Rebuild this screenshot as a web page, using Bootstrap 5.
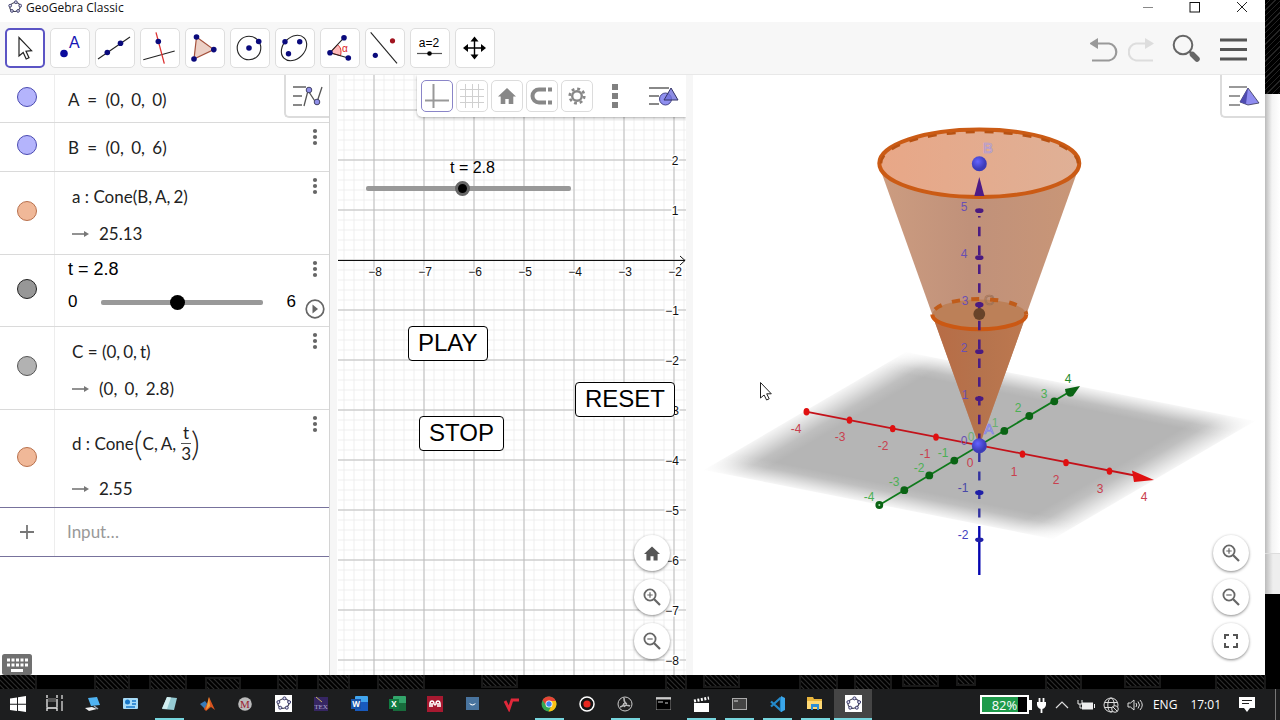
<!DOCTYPE html>
<html lang="en">
<head>
<meta charset="utf-8">
<meta name="viewport" content="width=device-width, initial-scale=1">
<title>GeoGebra Classic</title>
<link href="https://cdn.jsdelivr.net/npm/bootstrap@5.3.0/dist/css/bootstrap.min.css" rel="stylesheet">
<style>
  body { font-family: "Liberation Sans", Arial, sans-serif; background: #000; color: #222; min-height: 100vh; }
  svg { display: block; }
  button { padding: 0; border: 0; background: none; color: inherit; }
  .ui-font { font-family: "Open Sans", sans-serif; }
  .app-window { background: #fff; min-width: 0; }
  .title-strip { height: 22px; font-size: 12px; line-height: 15px; color: #111; }
  .win-btn { width: 47px; height: 15px; display: flex; justify-content: center; }
  .tool-strip { height: 53px; background: #f7f7f7; gap: 5px; padding: 6px 18px 0 5px; border-bottom: 1px solid #e8e8e8; }
  .tool-btn { width: 40px; height: 40px; background: #fff; border: 1px solid #dedede; border-radius: 5px; }
  .tool-btn svg { margin: -1px; }
  .tool-btn.selected { border: 2px solid #5b54c4; }
  .tool-btn.selected svg { margin: -2px; }
  .views { display: grid; grid-template-columns: 330fr 349fr 572fr; gap: 7px; background: #f6f6f6; }
  .view { position: relative; background: #fff; overflow: hidden; min-width: 0; }
  .view > svg { position: absolute; inset: 0; width: 100%; height: 100%; }
  .algebra { border-right: 1px solid #d4d4d4; }
  .view-toggle { position: absolute; top: 0; right: 0; width: 45px; height: 43px; background: #fff; border: solid #dcdcdc; border-width: 0 0 2px 2px; border-bottom-left-radius: 5px; display: flex; align-items: center; justify-content: center; }
  .style-bar { position: absolute; top: 0; right: 0; height: 42px; padding: 5px 6px 5px 4px; gap: 3px; background: #fff; border-bottom-left-radius: 5px; box-shadow: 0 1px 3px #0005; }
  .style-bar .toggle { padding-left: 19px; }
  .style-btn { width: 32px; height: 32px; border: 1px solid #dcdcdc; border-radius: 5px; }
  .style-btn svg { margin: -1px; }
  .style-btn.selected { border-color: #8a85c8; }

  .entry { display: flex; border-bottom: 1px solid #dadada; }
  .h-a { height: 48px; } .h-b { height: 49px; } .h-two { height: 83px; } .h-slider { height: 72px; } .h-frac { height: 98px; }
  .gutter { width: 55px; flex: none; border-right: 1px solid #ededed; display: flex; align-items: center; justify-content: center; padding-bottom: 4px; }
  .gutter button { width: 20px; height: 20px; border-radius: 50%; border: 1px solid; }
  .c-blue { background: #b4b4fc; border-color: #4a4ab0 !important; }
  .c-orange { background: #f0b898; border-color: #b8704c !important; }
  .c-dark { background: #979797; border-color: #222 !important; }
  .c-grey { background: #b2b2b2; border-color: #555 !important; }
  .math { font-family: Lato, "Open Sans", sans-serif; font-size: 17px; line-height: 37px; padding-left: 17px; padding-top: 6px; white-space: nowrap; }
  .math.simple { padding-left: 13px; }
  .math i { font-style: normal; margin-right: 3px; }
  .math b { font-weight: 400; margin: 0 4px; }
  .result { display: flex; align-items: center; gap: 10px; }
  .frac-line { height: 54px; display: flex; align-items: center; }
  .big-paren { font-weight: 300; font-size: 34px; line-height: 34px; }
  .frac { display: inline-flex; flex-direction: column; text-align: center; line-height: 20px; margin-left: 5px; }
  .frac span + span { border-top: 1px solid #555; }
  .side { width: 28px; flex: none; display: flex; flex-direction: column; align-items: center; }
  .side button { height: 28px; width: 20px; display: flex; justify-content: center; align-items: center; }
  .t-body { font-size: 18px; padding-left: 13px; padding-right: 5px; color: #000; }
  .t-body label { display: block; line-height: 28px; }
  .t-body .track-line { line-height: 38px; gap: 24px; font-size: 17px; }
  input[type=range] { appearance: none; -webkit-appearance: none; background: none; margin: 0; height: 17px; min-width: 0; }
  input[type=range]::-webkit-slider-runnable-track { height: 5px; background: #999; border-radius: 2px; }
  input[type=range]::-webkit-slider-thumb { -webkit-appearance: none; width: 15px; height: 15px; margin-top: -5px; border-radius: 50%; background: #000; }
  .canvas-range::-webkit-slider-thumb { width: 17px; height: 17px; margin-top: -6px; border: 3px solid #666; }
  .input-entry { height: 50px; border-top: 1px solid #77729c; border-bottom: 1px solid #77729c; margin-top: -1px; }
  .input-entry input { border: 0; width: 100%; padding: 0 12px 2px; font: 17px Lato, sans-serif; outline: 0; }
  .input-entry input::placeholder { color: #999; }
  .keyboard-btn { position: absolute; left: 2px; bottom: 0; }

  .pin { position: absolute; }
  .canvas-btn { height: 35px; padding: 0 9px 2px; border: 1px solid #000; border-radius: 4px; background: #fff; color: #000; font-size: 24px; line-height: 30px; }
  .p-play { left: 71px; top: 251px; } .p-stop { left: 82px; top: 341px; } .p-reset { left: 238px; top: 307px; }
  .p-slider { left: 29px; top: 83px; width: 205px; }
  .p-slider label { display: block; font-size: 16px; line-height: 20px; color: #000; padding-left: 84px; }
  .p-slider input { width: 100%; display: block; margin-top: 2px; }
  .float-stack { position: absolute; right: 16px; bottom: 16px; display: flex; flex-direction: column; gap: 8px; }
  .float-stack button { width: 36px; height: 36px; border-radius: 50%; background: #fff; box-shadow: 0 1px 3px #0007; display: flex; align-items: center; justify-content: center; }
  .tick-label text { text-anchor: middle; font-size: 12px; }

  .behind { width: 15px; }
  .behind .dark { height: 94px; background: repeating-linear-gradient(135deg, #000 0 3px, #242424 3px 4px); }
  .behind .page-edge { background: linear-gradient(90deg, #bbb, #f4f4f4 7px, #fff); }
  .behind .page-foot { height: 41px; background: linear-gradient(90deg, #bbb, #eee 8px); border-top: 1px solid #ddd; }
  .behind .rest { height: 81px; }
  .taskbar { height: 31px; background: #1d1e1f; color: #fff; }
  .task { width: 38px; height: 31px; display: flex; align-items: center; justify-content: center; border-bottom: 2px solid transparent; position: relative; flex: none; }
  .task.slim { width: 36px; } .task.wide { width: 40px; }
  .task.open::after { content: ""; position: absolute; left: 5px; right: 4px; bottom: -2px; height: 2px; background: #76d5dd; }
  .task.current { background: #454545; } .task.current::after { left: 0; right: 0; }
  .tray { font-size: 12px; margin-left: auto; }
  .tray .lang { margin: 0 13px 0 9px; }
  .tray .clock { margin-right: 18px; }
  .tray .gauge { width: 49px; height: 19px; border: 2px solid #fff; background: linear-gradient(90deg, #1e9a4a 80%, #000 80%); font-size: 13px; line-height: 16px; text-align: center; }
  .tray .nub { width: 3px; height: 10px; background: #fff; }
  .edge-line { width: 1px; height: 31px; background: #777; margin: 0 4px 0 19px; }
</style>
</head>
<body class="d-flex flex-column">
<svg width="0" height="0" class="position-absolute" aria-hidden="true">
  <defs>
    <symbol id="dots" viewBox="0 0 6 18"><g fill="#666"><circle cx="3" cy="3" r="2.1"/><circle cx="3" cy="9" r="2.1"/><circle cx="3" cy="15" r="2.1"/></g></symbol>
    <symbol id="arrow" viewBox="0 0 17 8"><path d="M0 4H13" stroke="#777" stroke-width="1.6"/><path d="M12 1l5 3-5 3z" fill="#777"/></symbol>
    <symbol id="zin" viewBox="0 0 20 20"><g fill="none" stroke="#666"><circle cx="8" cy="8" r="5.6" stroke-width="1.8"/><path d="M12 12l6 6" stroke-width="2.2"/><path d="M5.3 8h5.4M8 5.3v5.4" stroke-width="1.2"/></g></symbol>
    <symbol id="zout" viewBox="0 0 20 20"><g fill="none" stroke="#666"><circle cx="8" cy="8" r="5.6" stroke-width="1.8"/><path d="M12 12l6 6" stroke-width="2.2"/><path d="M5.3 8h5.4" stroke-width="1.2"/></g></symbol>
    <symbol id="home" viewBox="0 0 18 16"><path d="M9 0L0 8.500h2.700V16h4.600v-5h3.400v5h4.600V8.500H18z"/></symbol>
    <symbol id="ggb" viewBox="0 0 16 16"><ellipse cx="8" cy="8" rx="6" ry="5" fill="none" stroke="#445" stroke-width="1.3" transform="rotate(-15 8 8)"/><g fill="#dde" stroke="#336" stroke-width="1"><circle cx="9" cy="2.500" r="1.600"/><circle cx="14" cy="6.500" r="1.600"/><circle cx="11.500" cy="12.500" r="1.600"/><circle cx="4.500" cy="12.500" r="1.600"/><circle cx="2.500" cy="6.500" r="1.600"/></g></symbol>
  </defs>
</svg>

<div class="d-flex flex-grow-1">
  <main class="app-window d-flex flex-column flex-grow-1">
    <header class="title-strip ui-font d-flex">
      <svg class="ms-2 me-1" width="14" height="14"><use href="#ggb"/></svg>
      <span>GeoGebra Classic</span>
      <div class="ms-auto d-flex">
        <button class="win-btn" aria-label="Minimise"><svg width="12" height="14"><path d="M1 7.500h10" stroke="#888"/></svg></button>
        <button class="win-btn" aria-label="Maximise"><svg width="12" height="14"><rect x="1" y="2.500" width="9.500" height="9.500" fill="none" stroke="#111"/></svg></button>
        <button class="win-btn" aria-label="Close"><svg width="12" height="14"><path d="M1 2l10 10M11 2L1 12" stroke="#222"/></svg></button>
      </div>
    </header>

    <nav class="tool-strip d-flex" aria-label="Tools">
      <button class="tool-btn selected" aria-label="Move"><svg width="40" height="40"><path d="M14 9.500V28l4.200-3.500 3 6.500 2.800-1.200-3-6.600 5.600-.5z" fill="#fff" stroke="#222" stroke-width="1.200"/></svg></button>
      <button class="tool-btn" aria-label="Point"><svg width="40" height="40"><circle cx="14" cy="25.500" r="3.800" fill="#0a0a9c"/><text x="19" y="20" font-size="16" fill="#1515b5">A</text></svg></button>
      <button class="tool-btn" aria-label="Line"><svg width="40" height="40"><path d="M3 31L35 9" stroke="#222" stroke-width="1.100"/><g fill="#0a0a7c"><circle cx="12.300" cy="24.500" r="2.800"/><circle cx="25.500" cy="15.300" r="2.800"/></g></svg></button>
      <button class="tool-btn" aria-label="Perpendicular line"><svg width="40" height="40"><path d="M3.300 31.700L34.700 23" stroke="#222" stroke-width="1.100"/><path d="M16 4.300l8.300 31.400" stroke="#d33" stroke-width="1.300"/><circle cx="18.300" cy="13.500" r="2.800" fill="#0a0a7c"/></svg></button>
      <button class="tool-btn" aria-label="Polygon"><svg width="40" height="40"><path d="M11.500 9l17.300 12.600L9 31z" fill="#ecd0c6" stroke="#a4513c" stroke-width="1.200"/><g fill="#0a0a7c"><circle cx="11.500" cy="9" r="2.800"/><circle cx="28.800" cy="21.600" r="2.800"/><circle cx="9" cy="31" r="2.800"/></g></svg></button>
      <button class="tool-btn" aria-label="Circle"><svg width="40" height="40"><circle cx="19" cy="20" r="11.800" fill="none" stroke="#222" stroke-width="1.100"/><g fill="#0a0a7c"><circle cx="19" cy="20" r="2.800"/><circle cx="28.700" cy="13.500" r="2.800"/></g></svg></button>
      <button class="tool-btn" aria-label="Ellipse"><svg width="40" height="40"><ellipse cx="19" cy="20" rx="14.300" ry="10.800" transform="rotate(-45 19 20)" fill="none" stroke="#222" stroke-width="1.100"/><g fill="#0a0a7c"><circle cx="10" cy="13.700" r="2.700"/><circle cx="24.700" cy="13.700" r="2.700"/><circle cx="13.500" cy="25.700" r="2.700"/></g></svg></button>
      <button class="tool-btn" aria-label="Angle"><svg width="40" height="40"><path d="M10 24.700l7.500-8c3 2 4.300 6 3 11z" fill="#fbb" stroke="#d33"/><path d="M24 9.700L10 24.700 28.300 30" fill="none" stroke="#222" stroke-width="1.100"/><text x="22" y="24" font-size="10" fill="#d22">α</text><g fill="#0a0a7c"><circle cx="24" cy="9.700" r="2.800"/><circle cx="10" cy="24.700" r="2.800"/><circle cx="28.300" cy="30" r="2.800"/></g></svg></button>
      <button class="tool-btn" aria-label="Reflect"><svg width="40" height="40"><path d="M5.700 4.300L32 35.300" stroke="#222" stroke-width="1.100"/><circle cx="10.300" cy="27.300" r="2.600" fill="#0a0a7c"/><circle cx="27.500" cy="12.800" r="2.600" fill="#a11520"/></svg></button>
      <button class="tool-btn" aria-label="Slider"><svg width="40" height="40"><text x="19" y="19" text-anchor="middle" font-size="12">a=2</text><path d="M7 25.500h25" stroke="#555" stroke-width="1.200"/><circle cx="19.500" cy="25.500" r="2.300"/></svg></button>
      <button class="tool-btn" aria-label="Move view"><svg width="40" height="40"><path d="M19.500 11v18M10.500 20h18" stroke="#000" stroke-width="1.400"/><path d="M19.500 8.500l4 5h-8zM19.500 31.500l4-5h-8zM8 20l5-4v8zM31 20l-5-4v8z"/></svg></button>
      <div class="ms-auto d-flex align-items-center pb-1">
        <button aria-label="Undo" class="me-2"><svg width="30" height="26"><path d="M7 7.500h12a8.600 8.600 0 0 1 0 17H2" fill="none" stroke="#999" stroke-width="2.200"/><path d="M-1 7.500L8 2v11z" fill="#999"/></svg></button>
        <button aria-label="Redo" class="me-3"><svg width="28" height="26"><path d="M18 7.500H8a8.600 8.600 0 0 0 0 17h17" fill="none" stroke="#ddd" stroke-width="2.200"/><path d="M26 7.500L17 2v11z" fill="#ddd"/></svg></button>
        <button aria-label="Search" class="me-3"><svg width="32" height="30"><circle cx="11" cy="11" r="9.300" fill="none" stroke="#666" stroke-width="2"/><path d="M17 17l4 4" stroke="#666" stroke-width="2.500"/><path d="M20.500 20.500l4.500 4.500" stroke="#666" stroke-width="5.500" stroke-linecap="round"/></svg></button>
        <button aria-label="Menu"><svg width="27" height="26"><path d="M0 4h27M0 13.500h27M0 23h27" stroke="#555" stroke-width="2.800"/></svg></button>
      </div>
    </nav>

    <div class="views flex-grow-1">
      <section class="view algebra" aria-label="Algebra">
        <div class="entry h-a"><div class="gutter"><button class="c-blue" aria-label="Show A"></button></div><div class="math simple">A <b>=</b> (0,<i></i> 0,<i></i> 0)</div></div>
        <div class="entry h-b"><div class="gutter"><button class="c-blue" aria-label="Show B"></button></div><div class="math simple flex-grow-1">B <b>=</b> (0,<i></i> 0,<i></i> 6)</div><div class="side"><button aria-label="More"><svg width="6" height="18"><use href="#dots"/></svg></button></div></div>
        <div class="entry h-two"><div class="gutter"><button class="c-orange" aria-label="Show a"></button></div><div class="math flex-grow-1"><div>a : Cone(B,<i></i>A,<i></i>2)</div><div class="result"><svg width="17" height="8"><use href="#arrow"/></svg>25.13</div></div><div class="side"><button aria-label="More"><svg width="6" height="18"><use href="#dots"/></svg></button></div></div>
        <div class="entry h-slider"><div class="gutter"><button class="c-dark" aria-label="Show t"></button></div>
          <div class="t-body flex-grow-1"><label for="t1">t = 2.8</label><div class="track-line d-flex align-items-center"><span>0</span><input id="t1" type="range" class="flex-grow-1" min="0" max="6" step="0.1" value="2.8"><span>6</span></div></div>
          <div class="side"><button aria-label="More"><svg width="6" height="18"><use href="#dots"/></svg></button><button class="mt-2 pt-2" aria-label="Play"><svg width="20" height="20"><circle cx="10" cy="10" r="8.800" fill="none" stroke="#666" stroke-width="1.700"/><path d="M7.500 5.500L13 10l-5.500 4.500z" fill="#666"/></svg></button></div></div>
        <div class="entry h-two"><div class="gutter"><button class="c-grey" aria-label="Show C"></button></div><div class="math flex-grow-1"><div>C <b class="mx-0">=</b> (0,<i></i>0,<i></i>t)</div><div class="result"><svg width="17" height="8"><use href="#arrow"/></svg><span>(0,<i></i> 0,<i></i> 2.8)</span></div></div><div class="side"><button aria-label="More"><svg width="6" height="18"><use href="#dots"/></svg></button></div></div>
        <div class="entry h-frac"><div class="gutter"><button class="c-orange" aria-label="Show d"></button></div><div class="math flex-grow-1"><div class="frac-line"><span>d : Cone</span><span class="big-paren">(</span><span>C,<i></i>A,</span><span class="frac"><span>t</span><span>3</span></span><span class="big-paren">)</span></div><div class="result"><svg width="17" height="8"><use href="#arrow"/></svg>2.55</div></div><div class="side"><button aria-label="More"><svg width="6" height="18"><use href="#dots"/></svg></button></div></div>
        <div class="d-flex input-entry"><div class="gutter pb-0"><svg width="14" height="14"><path d="M7 0v14M0 7h14" stroke="#777" stroke-width="1.800"/></svg></div><input type="text" aria-label="Input" placeholder="Input…"></div>
        <button class="view-toggle" aria-label="Algebra style bar"><svg width="32" height="22"><path d="M1 2h13M1 11h9M1 20h9" stroke="#888" stroke-width="2"/><path d="M12 21L16 5.500l8.500 13L30 2" fill="none" stroke="#555" stroke-width="1.300"/><g fill="#8f8fe8" stroke="#446"><circle cx="17" cy="5" r="2.800"/><circle cx="25" cy="17" r="2.800"/></g></svg></button>
        <button class="keyboard-btn" aria-label="Keyboard"><svg width="31" height="22"><rect x="0" y="1" width="30" height="21" rx="2.500" fill="#707070"/><path d="M5 7h21M5 12h21" stroke="#fff" stroke-width="3" stroke-dasharray="3 1.500"/><path d="M9 17.500h12" stroke="#fff" stroke-width="3"/></svg></button>
      </section>

      <section class="view" aria-label="Graphics">
        <svg viewBox="337 75 349 600" preserveAspectRatio="xMinYMin slice">
          <defs>
            <pattern id="minor" x="3.500" y="9.500" width="10" height="10" patternUnits="userSpaceOnUse"><path d="M.5 0v10M0 .5h10" stroke="#eee"/></pattern>
            <pattern id="major" x="23.500" y="9.500" width="50" height="50" patternUnits="userSpaceOnUse"><path d="M.5 0v50M0 .5h50" stroke="#bdbdbd"/></pattern>
          </defs>
          <rect x="338" y="75" width="348" height="600" fill="url(#minor)"/>
          <rect x="338" y="75" width="348" height="600" fill="url(#major)"/>
          <path d="M338 260.500h347M680 256l5 4.500-5 4.500" fill="none" stroke="#111"/>
          <g class="tick-label" stroke="#fff" stroke-width="3" paint-order="stroke" fill="#111"><text x="375" y="276">−8</text><text x="425" y="276">−7</text><text x="475" y="276">−6</text><text x="525" y="276">−5</text><text x="575" y="276">−4</text><text x="625" y="276">−3</text><text x="675" y="276">−2</text>
          <text x="675" y="165">2</text><text x="675" y="215">1</text><text x="672" y="315">−1</text><text x="672" y="365">−2</text><text x="672" y="415">−3</text><text x="672" y="465">−4</text><text x="672" y="515">−5</text><text x="672" y="565">−6</text><text x="672" y="615">−7</text><text x="672" y="665">−8</text></g>
        </svg>
        <div class="pin p-slider"><label for="t2">t = 2.8</label><input id="t2" class="canvas-range" type="range" min="0" max="6" step="0.1" value="2.8"></div>
        <button class="pin canvas-btn p-play">PLAY</button>
        <button class="pin canvas-btn p-stop">STOP</button>
        <button class="pin canvas-btn p-reset">RESET</button>
        <div class="style-bar d-flex">
          <button class="style-btn selected" aria-label="Axes"><svg width="32" height="32"><path d="M12.500 4v24M4 20.500h24" stroke="#999" stroke-width="2"/></svg></button>
          <button class="style-btn" aria-label="Grid"><svg width="32" height="32"><path d="M9.500 4v24M16.500 4v24M22.500 4v24M4 9.500h24M4 16.500h24M4 22.500h24" stroke="#d0d0d0"/></svg></button>
          <button class="style-btn" aria-label="Home"><svg width="32" height="32"><use href="#home" x="7" y="8" width="18" height="16" fill="#888"/></svg></button>
          <button class="style-btn" aria-label="Snap"><svg width="32" height="32"><path d="M20 9.500h-7a6.500 6.500 0 0 0 0 13h7" fill="none" stroke="#888" stroke-width="4"/><path d="M22 9.500h4M22 22.500h4" stroke="#888" stroke-width="4"/></svg></button>
          <button class="style-btn" aria-label="Settings"><svg width="32" height="32"><circle cx="16" cy="16" r="4.800" fill="none" stroke="#888" stroke-width="2.400"/><circle cx="16" cy="16" r="7.300" fill="none" stroke="#888" stroke-width="2.600" stroke-dasharray="2.900 2.830"/></svg></button>
          <button class="ms-2" aria-label="More"><svg width="22" height="24"><path d="M8 0h6v6H8zM8 9h6v6H8zM8 18h6v6H8z" fill="#808080"/></svg></button>
          <button class="ms-auto toggle" aria-label="Graphics style bar"><svg width="32" height="24"><path d="M1 4h20M1 12h10M1 20h10" stroke="#888" stroke-width="2"/><circle cx="17.500" cy="15" r="6" fill="#8f8fef" stroke="#448"/><path d="M23 4l7 12H16z" fill="#6f6fdccc" stroke="#336"/></svg></button>
        </div>
        <div class="float-stack">
          <button aria-label="Home"><svg width="16" height="15" fill="#555"><use href="#home"/></svg></button>
          <button aria-label="Zoom in"><svg width="20" height="20"><use href="#zin"/></svg></button>
          <button aria-label="Zoom out"><svg width="20" height="20"><use href="#zout"/></svg></button>
        </div>
      </section>

      <section class="view" aria-label="3D Graphics">
        <svg viewBox="693 75 572 600" preserveAspectRatio="xMidYMid slice">
          <defs>
            <linearGradient id="f1" x2="1" y2="0"><stop offset="0" stop-color="#fff" stop-opacity=".95"/><stop offset=".3" stop-color="#fff" stop-opacity=".62"/><stop offset=".7" stop-color="#fff" stop-opacity=".14"/><stop offset="1" stop-color="#fff" stop-opacity="0"/></linearGradient>
            <linearGradient id="f2" href="#f1" x1="1" x2="0"/>
            <linearGradient id="f3" href="#f1" x2="0" y2="1"/>
            <linearGradient id="f4" href="#f1" x2="0" y1="1" y2="0"/>
            <linearGradient id="body"><stop offset="0" stop-color="#cc9c80"/><stop offset=".45" stop-color="#c0917a"/><stop offset="1" stop-color="#c99677"/></linearGradient>
            <linearGradient id="lid"><stop offset="0" stop-color="#e8a787"/><stop offset="1" stop-color="#dfb096"/></linearGradient>
            <linearGradient id="small"><stop offset="0" stop-color="#b86c45"/><stop offset=".5" stop-color="#b5734d"/><stop offset="1" stop-color="#bd784f"/></linearGradient>
            <radialGradient id="ball" cx=".4" cy=".35"><stop offset="0" stop-color="#6464ff"/><stop offset="1" stop-color="#3c3cb8"/></radialGradient>
          </defs>
          <g transform="matrix(3.49 .69 -2.02 1.18 906 352)">
            <rect width="100" height="100" fill="#b5b5b5"/>
            <rect x="-1" y="-1" width="14" height="102" fill="url(#f1)"/><rect x="87" y="-1" width="14" height="102" fill="url(#f2)"/><rect x="-1" y="-1" width="102" height="15" fill="url(#f3)"/><rect x="-1" y="86" width="102" height="15" fill="url(#f4)"/>
          </g>
          <path d="M806 411.700L1140 476.500" stroke="#c4121a" stroke-width="1.800"/>
          <g fill="#e01010"><path d="M1132 470.500l22 9.500-20 2z"/><ellipse cx="806.500" cy="411.700" rx="3" ry="3.800"/><ellipse cx="849.500" cy="420.200" rx="2.800" ry="3.600"/><ellipse cx="892.700" cy="428.700" rx="2.800" ry="3.600"/><ellipse cx="936" cy="437.200" rx="2.800" ry="3.600"/><ellipse cx="1022.500" cy="454.200" rx="2.800" ry="3.600"/><ellipse cx="1066" cy="462.700" rx="2.800" ry="3.600"/><ellipse cx="1109.500" cy="471.200" rx="2.800" ry="3.600"/></g>
          <path d="M879.300 505L1070 391.500" stroke="#0f7a1c" stroke-width="1.800"/>
          <g fill="#0a6414"><path d="M1065 389l15-3-7 10q-7 3-8-7z"/><circle cx="879.300" cy="505" r="3.900"/><circle cx="904.300" cy="490.200" r="3.900"/><circle cx="929.300" cy="475.400" r="3.900"/><circle cx="954.300" cy="460.600" r="3.900"/><circle cx="1004.300" cy="430.900" r="3.900"/><circle cx="1029.300" cy="416" r="3.900"/><circle cx="1054.300" cy="401.300" r="3.900"/></g>
          <circle cx="879.300" cy="505" r="1" fill="#b8e0b8"/>
          <path d="M882 174L979.300 446 1076.500 174z" fill="url(#body)"/>
          <path d="M933 317L979.300 446 1025.500 317z" fill="url(#small)"/>
          <ellipse cx="979.300" cy="314.500" rx="47" ry="15" fill="#bc8058"/>
          <ellipse cx="979.300" cy="163.300" rx="100" ry="34" fill="url(#lid)"/>
          <path d="M932.300 314.500a47 15.500 0 0 1 94 0" fill="none" stroke="#c05c1a" stroke-width="4" stroke-dasharray="8 11" stroke-dashoffset="-6"/>
          <path d="M932.300 314.500a47 14.800 0 0 0 94 0" fill="none" stroke="#cb5813" stroke-width="4"/>
          <ellipse cx="979.300" cy="163.300" rx="100" ry="33.700" fill="none" stroke="#cb5b15" stroke-width="4"/>
          <path d="M881 163.500a98.500 31.500 0 0 1 197 0" fill="none" stroke="#b85212" stroke-width="2.500" stroke-dasharray="9 10"/>
          <path d="M979.300 216V440" stroke="#4b1c82" stroke-width="2.600" stroke-dasharray="9.500 9.300" stroke-dashoffset="8"/>
          <path d="M979.300 453V526" stroke="#3232a0" stroke-width="2.400" stroke-dasharray="9 9.500"/><path d="M979.300 526v49" stroke="#0505b0" stroke-width="2.400"/>
          <path d="M979.300 177l5 19h-10z" fill="#4d1b86"/>
          <g fill="#4a1a80"><ellipse cx="979.300" cy="210.700" rx="4.200" ry="2.400"/><ellipse cx="979.300" cy="257.700" rx="4.200" ry="2.400"/><ellipse cx="979.300" cy="304.700" rx="4.200" ry="2.600"/><ellipse cx="979.300" cy="351.700" rx="4.200" ry="2.400"/><ellipse cx="979.300" cy="398.700" rx="4.200" ry="2.400"/></g>
          <g fill="#1f1fa8"><ellipse cx="979.300" cy="492.700" rx="4.200" ry="2.400"/><ellipse cx="979.300" cy="539.800" rx="4.200" ry="2.400"/></g>
          <circle cx="979.300" cy="163.700" r="7.500" fill="url(#ball)"/><circle cx="979.300" cy="445.700" r="7.500" fill="url(#ball)"/><circle cx="979.300" cy="314" r="5.900" fill="#684329"/>
          <g class="tick-label" fill="#c9404e"><text x="796" y="433">-4</text><text x="840" y="441">-3</text><text x="883" y="450">-2</text><text x="925" y="458">-1</text><text x="970" y="467">0</text><text x="1014" y="476">1</text><text x="1056" y="484">2</text><text x="1100" y="493">3</text><text x="1144" y="501">4</text></g>
          <g class="tick-label" fill="#4bb054"><text x="869" y="501">-4</text><text x="894" y="486">-3</text><text x="919" y="472">-2</text><text x="943" y="457">-1</text><text x="971" y="441" opacity=".7">0</text><text x="995" y="427" opacity=".7">1</text><text x="1018" y="412">2</text><text x="1044" y="398">3</text><text x="1068" y="383" fill="#218a2a">4</text></g>
          <g class="tick-label" fill="#6a50b4"><text x="964" y="211">5</text><text x="964" y="258">4</text><text x="965" y="305">3</text><text x="964" y="352">2</text><text x="965" y="399">1</text><text x="964" y="445">0</text><text x="963" y="492" fill="#4848a8">-1</text><text x="963" y="539" fill="#4040c0">-2</text></g>
          <g font-size="14" text-anchor="middle" fill="none" stroke-width=".7"><text x="988" y="153" stroke="#a99be0" font-size="15">B</text><text x="989" y="434" stroke="#8080f0">A</text><text x="989" y="305" stroke="#9c7055">C</text></g>
          <path d="M760.500 382.500v15.500l3.600-3 2.500 5 2.600-1.200-2.500-5h4.600z" fill="#fff" stroke="#222"/>
        </svg>
        <button class="view-toggle" aria-label="3D style bar"><svg width="32" height="22"><path d="M1 2h18M1 11h11M1 20h11" stroke="#999" stroke-width="2"/><path d="M20 3l11 15-11 2-8-3z" fill="#8f8cf0" stroke="#335" stroke-width=".8"/><path d="M20 3l-2 16-6-2z" fill="#4f4bb0"/></svg></button>
        <div class="float-stack">
          <button aria-label="Zoom in"><svg width="20" height="20"><use href="#zin"/></svg></button>
          <button aria-label="Zoom out"><svg width="20" height="20"><use href="#zout"/></svg></button>
          <button aria-label="Full screen"><svg width="16" height="16"><path d="M2 6V2h4M10 2h4v4M14 10v4h-4M6 14H2v-4" fill="none" stroke="#555" stroke-width="2"/></svg></button>
        </div>
      </section>
    </div>
  </main>
  <aside class="behind d-flex flex-column" aria-hidden="true"><div class="dark"></div><div class="page-edge flex-grow-1"></div><div class="page-foot"></div><div class="rest"></div></aside>
</div>

<svg class="w-100" height="14" aria-hidden="true"><defs><pattern id="hatch" width="5" height="5" patternUnits="userSpaceOnUse"><path d="M-1 1l2-2M-1 -1l7 7M4 -1l2 2M-1 4l2 2" stroke="#2c2c2c" stroke-width="1.200"/></pattern></defs>
  <g fill="url(#hatch)" stroke="#191919" stroke-width="2"><path d="M-2-2h38v18H-2zM95-2h34v18H95zM150-2h36v18h-36zM206 3h34v13h-34zM278-2h19v18h-19zM318-2h31v18h-31zM378-2h46v18h-46zM482-2h35v14h-35zM666-2h20v18h-20zM704-2h35v14h-35zM800-2h37v18h-37zM855-2h36v18h-36zM903-2h35v13h-35zM957-2h18v12h-18zM1046-2h35v18h-35zM1125-2h35v14h-35zM1216-2h49v18h-49z"/></g></svg>

<footer class="taskbar ui-font d-flex">
  <button class="task slim" aria-label="Start"><svg width="16" height="16"><path d="M0 2.500l7-1v6.300H0zM8 1.300L16 0v7.800H8zM0 8.700h7V15l-7-1zM8 8.700h8V16l-8-1.200z" fill="#fff"/></svg></button>
  <button class="task slim" aria-label="Task view"><svg width="17" height="17"><path d="M1 0v3M11 0v3M1 16v-3h10v3M1 4v8M11 4v8" stroke="#eee" fill="none" stroke-width="1.300"/><path d="M2 3h8v4H2z" fill="#555"/><path d="M16 0v4M16 6v10" stroke="#999" stroke-width="2"/></svg></button>
  <button class="task wide" aria-label="Remote desktop"><svg width="17" height="16"><path d="M4 2l9-1 3 8-9 1z" fill="#4fb3f3"/><path d="M10 10l4 3" stroke="#9ab" fill="none" stroke-width="1.500"/><path d="M1 12l7-1 5 2-8 2z" fill="#eee"/></svg></button>
  <button class="task" aria-label="Control panel"><svg width="16" height="14"><rect y="1" width="15" height="11" rx="1" fill="#a8dcf8"/><circle cx="4.500" cy="5" r="2.500" fill="#1877c8"/><path d="M9 4h4M9 7h4M3 10h9" stroke="#1877c8" stroke-width="1.500"/></svg></button>
  <button class="task open" aria-label="Notepad"><svg width="17" height="16"><path d="M6 1l10 1-3 12-12-1z" fill="#95cbd3"/><path d="M6 1l4 .5L6 13l-5-.5z" fill="#d3eef0"/></svg></button>
  <button class="task" aria-label="MATLAB"><svg width="17" height="16"><path d="M1 8l5-3 3 4-3 4z" fill="#367bb8"/><path d="M10 1l6 13-4-3-5 4-2-2 3-5z" fill="#d8541f"/><path d="M10 1l1 9-4 4z" fill="#f1a13a"/></svg></button>
  <button class="task" aria-label="MiKTeX"><svg width="16" height="16"><circle cx="8" cy="8" r="6.800" fill="#bbb"/><text x="8" y="12" font-family="Liberation Serif, serif" font-size="11" text-anchor="middle" fill="#9b2230">M</text></svg></button>
  <button class="task" aria-label="GeoGebra"><svg width="17" height="17"><rect width="17" height="17" fill="#fff"/><use href="#ggb" x="1" y="1" width="15" height="15"/></svg></button>
  <button class="task" aria-label="TeXworks"><svg width="15" height="15"><rect y="1" width="14" height="14" fill="#362663"/><text x="7" y="13" font-family="Liberation Serif, serif" font-size="7" text-anchor="middle" fill="#aaa5cf">TEX</text><path d="M2 1l6 5" stroke="#c8b660"/></svg></button>
  <button class="task" aria-label="Word"><svg width="17" height="16"><rect x="4" width="13" height="15" rx="1" fill="#41a5ee"/><path d="M4 6h13v9H4z" fill="#185abd"/><rect y="3" width="10" height="10" fill="#1853a8"/><text x="5" y="11" font-size="8" font-weight="700" text-anchor="middle" fill="#fff">W</text></svg></button>
  <button class="task" aria-label="Excel"><svg width="17" height="16"><rect x="4" width="13" height="15" rx="1" fill="#33a56b"/><path d="M4 7h13v8H4z" fill="#186c3c"/><rect y="3" width="10" height="10" fill="#107c41"/><text x="5" y="11" font-size="8" font-weight="700" text-anchor="middle" fill="#fff">X</text></svg></button>
  <button class="task" aria-label="Mendeley"><svg width="16" height="16"><rect width="16" height="16" fill="#a71930"/><path d="M3 11V8q0-3 2-3t2 3q1 2 2 0 0-3 2-3t2 3v3M5 7v4M11 7v4" fill="none" stroke="#fff" stroke-width="1.600"/></svg></button>
  <button class="task" aria-label="Pocket"><svg width="14" height="14"><rect width="13" height="13" fill="#49749e"/><path d="M3 6q3.500 5 7 0l-3.500 1.500z" fill="#fff"/></svg></button>
  <button class="task" aria-label="Root"><svg width="17" height="16"><path d="M2 5l4 8 3-9h7" fill="none" stroke="#e0283a" stroke-width="2.800"/></svg></button>
  <button class="task open" aria-label="Chrome"><svg width="16" height="16" viewBox="0 0 16 16"><circle cx="8" cy="8" r="7.500" fill="#35a853"/><path d="M1.500 4.200A7.500 7.500 0 0 1 14.800 5H8l-2.500 5z" fill="#e64435"/><path d="M14.800 5a7.500 7.500 0 0 1-7.300 10.500L11 9 8 5z" fill="#fbc116"/><circle cx="8" cy="8" r="3.500" fill="#fff"/><circle cx="8" cy="8" r="2.700" fill="#4285f4"/></svg></button>
  <button class="task" aria-label="Recorder"><svg width="16" height="16"><circle cx="8" cy="8" r="7" fill="#151515" stroke="#fff" stroke-width="1.500"/><circle cx="8" cy="8" r="3.600" fill="#e8271f"/></svg></button>
  <button class="task open" aria-label="OBS"><svg width="16" height="16"><circle cx="8" cy="8" r="7" fill="#222" stroke="#ccc"/><path d="M7 2q0 5 3 6M13 10q-5-2-6 1M3 11q4-1 4-4" fill="none" stroke="#bbb" stroke-width="1.600"/></svg></button>
  <button class="task" aria-label="Command prompt"><svg width="15" height="13"><path d="M0 .5h15V13H0z" fill="#000" stroke="#999"/><path d="M0 1.500h15" stroke="#ccc" stroke-width="2"/><path d="M2 5h5M9 6h3" stroke="#ccc"/></svg></button>
  <button class="task open" aria-label="Video editor"><svg width="17" height="16"><path d="M1 7h15v9H1z" fill="#fff"/><path d="M1 5l15-3" stroke="#fff" stroke-width="3" stroke-dasharray="2 1.500"/></svg></button>
  <button class="task open" aria-label="Console"><svg width="15" height="12"><rect x=".5" y=".5" width="14" height="11" fill="#444" stroke="#aaa"/><path d="M2 3h4" stroke="#ddd"/></svg></button>
  <button class="task open" aria-label="Visual Studio Code"><svg width="17" height="16"><path d="M12 1.500v13L2 5.500M12 1.500L2 10.500" fill="none" stroke="#2489ca" stroke-width="2.300"/><path d="M12 0l4 2v12l-4 2z" fill="#3aa6ea"/></svg></button>
  <button class="task open" aria-label="File Explorer"><svg width="16" height="15"><path d="M0 1h6l1 2h8v10H0z" fill="#e8b53c"/><path d="M0 5h15v8H0z" fill="#ffd974"/><path d="M4 14V8h8v6h-2v-3H6v3z" fill="#2f8fd6"/></svg></button>
  <button class="task open current" aria-label="GeoGebra Classic"><svg width="17" height="17"><rect width="17" height="17" fill="#fff"/><use href="#ggb" x="1" y="1" width="15" height="15"/></svg></button>
  <div class="tray d-flex align-items-center">
    <span class="gauge">82%</span><span class="nub"></span>
    <svg class="ms-1" width="11" height="18"><path d="M3.500 2v4M7.500 2v4M5.500 10v7" stroke="#fff" stroke-width="1.800"/><path d="M1 6h9v3q-1 4-4.500 4T1 9z" fill="#fff"/></svg>
    <svg class="ms-2 me-2" width="14" height="10"><path d="M1 8l6-6 6 6" fill="none" stroke="#ddd" stroke-width="1.200"/></svg>
    <svg class="me-2" width="18" height="12"><rect x="5" y="3.500" width="11" height="7" fill="#eee"/><path d="M17.500 5v4M1 1v4h4V1M3 5v4h3" stroke="#eee" fill="none"/></svg>
    <svg class="me-2" width="16" height="16"><g fill="none" stroke="#ddd"><circle cx="8" cy="8" r="7"/><ellipse cx="8" cy="8" rx="3.200" ry="7"/><path d="M1.500 5.500h13M1.500 10.500h13"/></g><circle cx="12" cy="12" r="3.300" fill="#222" stroke="#ddd"/><path d="M10 10l4 4" stroke="#ddd"/></svg>
    <svg width="17" height="14"><path d="M1 5h2.500L7 2v10L3.500 9H1zM9 5q1.500 2 0 4M11 3.500q3 3.500 0 7M13 2q4.500 5 0 10" fill="none" stroke="#ddd"/></svg>
    <span class="lang">ENG</span><span class="clock">17:01</span>
    <svg width="17" height="17"><path d="M0 1h16v11h-5l-3 4-3-4H0z" fill="#fff"/><path d="M3 4.500h10M3 7.500h7" stroke="#222"/></svg>
    <span class="edge-line"></span>
  </div>
</footer>
<script src="https://cdn.jsdelivr.net/npm/bootstrap@5.3.0/dist/js/bootstrap.bundle.min.js"></script>
</body>
</html>
